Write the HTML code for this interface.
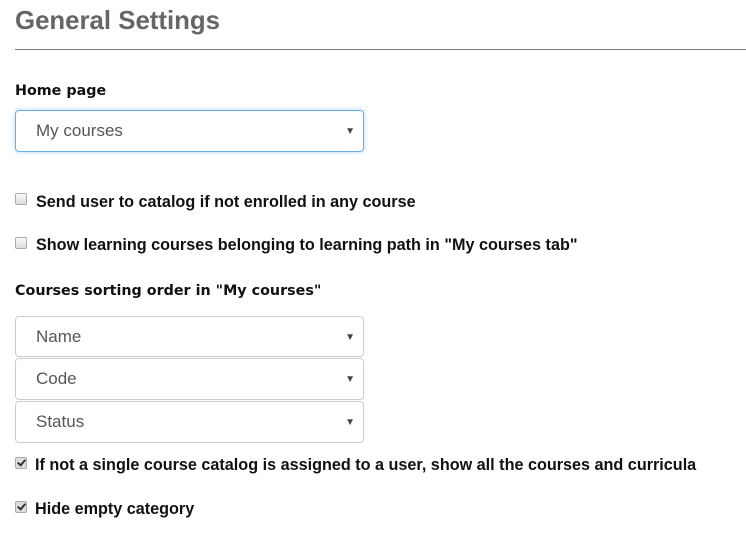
<!DOCTYPE html><html><head><style>
body{margin:0;width:746px;height:533px;background:#fff;position:relative;overflow:hidden;font-family:"Liberation Sans",Arial,sans-serif}
.a{position:absolute;white-space:nowrap}
h1{position:absolute;left:15px;top:7px;margin:0;font-weight:bold;color:#666;font-family:"Liberation Sans",sans-serif;font-size:25.8px;white-space:nowrap}
.hr{position:absolute;left:15px;right:0;top:49px;height:1px;background:#777}
.lbl{font-weight:bold;color:#111;font-family:"DejaVu Sans","Liberation Sans",sans-serif;font-size:14.3px}
.sel{position:absolute;left:15px;width:349px;height:40px;border:1px solid #ccc;border-radius:4px;box-sizing:border-box}
.sel span{position:absolute;left:20px;top:10px;font-size:17px;color:#555}
.sel i{position:absolute;right:8px;top:15px;font-style:normal;font-size:10px;color:#444}
.cb{position:absolute;left:15px;width:12px;height:12px;border:1px solid #aaa;border-radius:2px;background:linear-gradient(#fafafa,#ddd);box-sizing:border-box}
.cb.on{background:#ddd}
.cb.on:after{content:"";position:absolute;left:3px;top:0px;width:3px;height:6px;border:solid #333;border-width:0 2px 2px 0;transform:rotate(40deg)}
.t{position:absolute;left:36px;font-weight:bold;font-size:16.2px;color:#111;white-space:nowrap}
</style></head><body>
<h1>General Settings</h1>
<div class="hr"></div>
<div class="a lbl" style="left:15px;top:83px">Home page</div>
<div class="sel" style="top:110px;height:42px;border-color:#66afe9;box-shadow:0 0 5px rgba(102,175,233,.5)"><span>My courses</span><i>▼</i></div>
<div class="cb" style="top:193px"></div><div class="t" style="top:193px">Send user to catalog if not enrolled in any course</div>
<div class="cb" style="top:237px"></div><div class="t" style="top:236px">Show learning courses belonging to learning path in "My courses tab"</div>
<div class="a lbl" style="left:15px;top:283px">Courses sorting order in "My courses"</div>
<div class="sel" style="top:316px;height:41px"><span>Name</span><i>▼</i></div>
<div class="sel" style="top:358px;height:42px"><span>Code</span><i>▼</i></div>
<div class="sel" style="top:401px;height:42px"><span>Status</span><i>▼</i></div>
<div class="cb on" style="top:457px"></div><div class="t" style="top:456px;left:35px">If not a single course catalog is assigned to a user, show all the courses and curricula</div>
<div class="cb on" style="top:501px"></div><div class="t" style="top:500px;left:35px">Hide empty category</div>
</body></html>
